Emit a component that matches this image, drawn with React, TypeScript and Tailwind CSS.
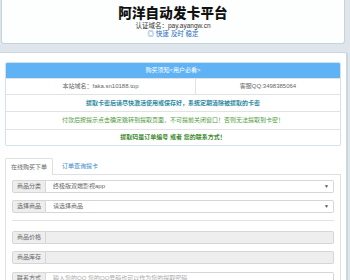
import React from "react";

const font = "font-['Liberation_Sans','Noto_Sans_CJK_SC',sans-serif]";

const InputRow: React.FC<{ label: string; children?: React.ReactNode; tone?: "white" | "gray"; caret?: boolean }> = ({
    label,
    children,
    tone = "white",
    caret,
}) => (
    <div className="flex h-[13px] w-full">
        <div className="flex w-[34px] shrink-0 items-center justify-center rounded-l-[2px] border border-[#d6d6d6] bg-[#eeeeee] text-[6px] text-[#666]">
            {label}
        </div>
        <div
            className={`flex flex-1 items-center justify-between rounded-r-[2px] border border-l-0 border-[#d6d6d6] pl-[7px] pr-[4px] text-[6px] text-[#666] ${
                tone === "gray" ? "bg-[#eeeeee]" : "bg-white"
            }`}>
            <span>{children}</span>
            {caret && <span className="text-[5px] text-[#555]">▼</span>}
        </div>
    </div>
);

export default function App() {
    return (
        <div className={`h-[280px] w-[350px] overflow-hidden bg-[#dfe6eb] ${font}`}>
            {/* header */}
            <header className="ml-[1px] flex h-[44px] w-[344px] flex-col items-center rounded-b-[3px] border border-t-0 border-[#c4d3dc] bg-[#fdfefe] pt-[7px]">
                <h1 className="h-[14px] text-[13.5px] font-black leading-[14px] tracking-[0.2px] text-[#111]">
                    阿洋自动发卡平台
                </h1>
                <p className="mt-[1px] h-[8px] text-[6.5px] leading-[8px] text-[#333]">认证域名：pay.ayangw.cn</p>
                <p className="h-[8px] text-[6.5px] leading-[8px] text-[#2a6cc0]">◎ 快速 及时 稳定</p>
            </header>

            <div className="h-[8px]" />

            <main className="h-[240px] w-[348px] rounded-tr-[3px] border-r-2 border-t border-[#c8d7e0] bg-white pl-[5px] pt-[9px]">
                {/* notice panel */}
                <div className="w-[336px] overflow-hidden rounded-[2px] border border-[#cfe3ef] text-center text-[6px]">
                    <div className="flex h-[15px] items-center justify-center bg-[#5fb3f5] text-white">
                        购买须知&lt;用户必看&gt;
                    </div>
                    <div className="flex h-[16px] border-t border-[#e2e2e2] text-[#666]">
                        <div className="flex w-[190px] items-center justify-center border-r border-[#e2e2e2]">
                            本站域名：faka.sn10188.top
                        </div>
                        <div className="flex flex-1 items-center justify-center">客服QQ:3498385064</div>
                    </div>
                    <div className="flex h-[17px] items-center justify-center border-t border-[#e2e2e2] font-bold text-[#2f8aa0]">
                        提取卡密后请尽快激活使用或保存好，系统定期清除被提取的卡密
                    </div>
                    <div className="flex h-[18px] items-center justify-center border-t border-[#e2e2e2] text-[#4f9a3c]">
                        付款后按提示点击确定跳转到提取页面，不可提前关闭窗口！否则无法提取到卡密！
                    </div>
                    <div className="flex h-[16px] items-center justify-center border-t border-[#e2e2e2] font-bold text-[#3c8a2e]">
                        提取码是订单编号 或者 您的联系方式！
                    </div>
                </div>

                {/* tabs */}
                <div className="mt-[12px] flex h-[16px] items-stretch text-[6px]">
                    <div className="relative z-10 -mb-[1px] flex w-[48px] items-center justify-center rounded-t-[2px] border border-b-0 border-[#e0e0e0] bg-white text-[#666]">
                        在线购买下单
                    </div>
                    <div className="flex items-center pl-[9px] text-[#3a86c8]">订单查询提卡</div>
                </div>
                <div className="flex w-[336px] flex-col border border-[#e0e0e0] px-[6px] pt-[5px] pb-[8px]">
                    <InputRow label="商品分类" caret>
                        终极版双端影视app
                    </InputRow>
                    <div className="mt-[7px]">
                        <InputRow label="选择商品" caret>
                            请选择商品
                        </InputRow>
                    </div>
                    <div className="mt-[7px] h-px w-full bg-[#e3e3e3]" />
                    <div className="mt-[10px]">
                        <InputRow label="商品价格" tone="gray" />
                    </div>
                    <div className="mt-[7px]">
                        <InputRow label="商品库存" tone="gray" />
                    </div>
                    <div className="mt-[8px]">
                        <InputRow label="联系方式">
                            <span className="text-[#aaa]">输入您的QQ 您的QQ号码也可以作为您的提取密码</span>
                        </InputRow>
                    </div>
                </div>
            </main>
        </div>
    );
}
